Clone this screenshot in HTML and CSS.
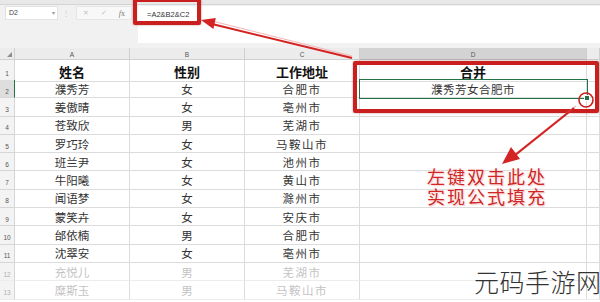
FILE: index.html
```html
<!DOCTYPE html>
<html lang="zh-CN">

<head>
    <meta charset="UTF-8">
    <meta name="viewport" content="width=device-width, initial-scale=1.0">
    <title>合并单元格</title>
    <link rel="stylesheet" href="styles.css">
</head>

<body>
    <div class="page">
        <div class="formula-area">
            <div class="ribbon-edge"></div>
            <div class="formula-row">
                <div class="left-tools">
                    <div class="name-box">D2 <span class="caret">▾</span></div>
                    <span class="sep">⋮</span>
                    <div class="fx-box">
                        <span class="fx-btn">✕</span>
                        <span class="fx-btn">✓</span>
                        <span class="fx-label"><i>f</i>x</span>
                    </div>
                </div>
                <div class="formula-input">=A2&amp;B2&amp;C2</div>
            </div>
        </div>

        <div class="sheet">
            <div class="row col-head">
                <div class="cell corner"><span class="corner-mark"></span></div>
                <div class="cell">A</div>
                <div class="cell">B</div>
                <div class="cell">C</div>
                <div class="cell selected-head">D</div>
                <div class="cell"></div>
            </div>
            <div class="row first">
                <div class="cell num">1</div>
                <div class="cell bold">姓名</div>
                <div class="cell bold">性别</div>
                <div class="cell bold">工作地址</div>
                <div class="cell bold">合并</div>
                <div class="cell"></div>
            </div>
            <div class="row">
                <div class="cell num active">2</div>
                <div class="cell name">濮秀芳</div>
                <div class="cell">女</div>
                <div class="cell city">合肥市</div>
                <div class="cell merged">濮秀芳女合肥市</div>
                <div class="cell"></div>
            </div>
            <div class="row">
                <div class="cell num">3</div>
                <div class="cell name">姜傲晴</div>
                <div class="cell">女</div>
                <div class="cell city">亳州市</div>
                <div class="cell"></div>
                <div class="cell"></div>
            </div>
            <div class="row">
                <div class="cell num">4</div>
                <div class="cell name">苍致欣</div>
                <div class="cell">男</div>
                <div class="cell city">芜湖市</div>
                <div class="cell"></div>
                <div class="cell"></div>
            </div>
            <div class="row">
                <div class="cell num">5</div>
                <div class="cell name">罗巧玲</div>
                <div class="cell">女</div>
                <div class="cell city">马鞍山市</div>
                <div class="cell"></div>
                <div class="cell"></div>
            </div>
            <div class="row">
                <div class="cell num">6</div>
                <div class="cell name">班兰尹</div>
                <div class="cell">女</div>
                <div class="cell city">池州市</div>
                <div class="cell"></div>
                <div class="cell"></div>
            </div>
            <div class="row">
                <div class="cell num">7</div>
                <div class="cell name">牛阳曦</div>
                <div class="cell">女</div>
                <div class="cell city">黄山市</div>
                <div class="cell"></div>
                <div class="cell"></div>
            </div>
            <div class="row">
                <div class="cell num">8</div>
                <div class="cell name">闻语梦</div>
                <div class="cell">女</div>
                <div class="cell city">滁州市</div>
                <div class="cell"></div>
                <div class="cell"></div>
            </div>
            <div class="row">
                <div class="cell num">9</div>
                <div class="cell name">蒙笑卉</div>
                <div class="cell">女</div>
                <div class="cell city">安庆市</div>
                <div class="cell"></div>
                <div class="cell"></div>
            </div>
            <div class="row">
                <div class="cell num">10</div>
                <div class="cell name">邰依楠</div>
                <div class="cell">男</div>
                <div class="cell city">合肥市</div>
                <div class="cell"></div>
                <div class="cell"></div>
            </div>
            <div class="row">
                <div class="cell num">11</div>
                <div class="cell name">沈翠安</div>
                <div class="cell">女</div>
                <div class="cell city">亳州市</div>
                <div class="cell"></div>
                <div class="cell"></div>
            </div>
            <div class="row faded">
                <div class="cell num">12</div>
                <div class="cell name">充悦儿</div>
                <div class="cell">男</div>
                <div class="cell city">芜湖市</div>
                <div class="cell"></div>
                <div class="cell"></div>
            </div>
            <div class="row faded">
                <div class="cell num">13</div>
                <div class="cell name">糜斯玉</div>
                <div class="cell">男</div>
                <div class="cell city">马鞍山市</div>
                <div class="cell"></div>
                <div class="cell"></div>
            </div>
        </div>

        <!-- annotations drawn over the sheet -->
        <div class="mark formula-mark"></div>
        <div class="mark range-mark"></div>
        <div class="cell-cursor"><span class="handle"></span></div>

        <svg class="arrows" width="600" height="302" viewBox="0 0 600 302">
            <line x1="352" y1="56" x2="212" y2="21" stroke="#f2b8b8" stroke-width="1.2" />
            <line x1="352" y1="58" x2="212" y2="24" stroke="#d42323" stroke-width="2" />
            <polygon points="201,20 215.8,18 213.4,29" fill="#d42323" />
            <circle cx="586" cy="100" r="7" fill="none" stroke="#c81f1f" stroke-width="1.6" />
            <line x1="576" y1="106" x2="514" y2="155" stroke="#f2b8b8" stroke-width="1.2" />
            <line x1="574" y1="108" x2="514" y2="156" stroke="#d42323" stroke-width="2.2" />
            <polygon points="502,164 520,159 511,147" fill="#d42323" />
        </svg>

        <div class="note">左键双击此处<br>实现公式填充</div>
        <div class="watermark">元码手游网</div>
    </div>
</body>

</html>
```

FILE: styles.css
```css
body {
    margin: 0;
    background-color: #ffffff;
    font-family: "Noto Sans CJK SC", "Liberation Sans", sans-serif;
}

.page {
    position: relative;
    width: 600px;
    height: 302px;
    overflow: hidden;
    background-color: #ffffff;
}

/* formula bar */

.formula-area {
    height: 48px;
    background-color: #f1f1f1;
    display: flex;
    flex-direction: column;
}

.ribbon-edge {
    height: 5px;
    background-color: #e8e8e8;
    border-bottom: 1px solid #d4d4d4;
    box-sizing: border-box;
}

.formula-row {
    display: flex;
    padding-top: 1px;
}

.left-tools {
    display: flex;
    align-items: flex-start;
    width: 138px;
    padding-left: 5px;
    box-sizing: border-box;
}

.name-box {
    width: 53px;
    height: 14px;
    background-color: #ffffff;
    border: 1px solid #e2e2e2;
    box-sizing: border-box;
    font-family: "Liberation Sans", sans-serif;
    font-size: 7px;
    line-height: 12px;
    color: #444;
    padding-left: 3px;
    display: flex;
    justify-content: space-between;
    padding-right: 2px;
}

.caret {
    color: #999;
    font-size: 6px;
}

.sep {
    color: #c8c8c8;
    font-size: 8px;
    line-height: 14px;
    margin: 0 6px 0 4px;
}

.fx-box {
    width: 56px;
    height: 14px;
    background-color: #f8f8f8;
    border: 1px solid #e6e6e6;
    box-sizing: border-box;
    display: flex;
    align-items: center;
    justify-content: space-around;
    font-family: "DejaVu Sans", sans-serif;
    font-size: 7px;
    color: #c4c4c4;
}

.fx-label {
    color: #777;
    font-family: "Liberation Serif", serif;
    font-size: 8px;
}

.formula-input {
    flex: 1;
    height: 37px;
    background-color: #ffffff;
    font-family: "Liberation Sans", sans-serif;
    font-size: 7.5px;
    color: #333;
    padding: 4px 0 0 9px;
    box-sizing: border-box;
}

/* grid */

.row {
    display: grid;
    grid-template-columns: 15px 115px 115px 115px 227px 1fr;
    height: 18.3px;
}

.cell {
    border-right: 1px solid #dcdcdc;
    border-bottom: 1px solid #dcdcdc;
    box-sizing: border-box;
    display: flex;
    align-items: center;
    justify-content: center;
    font-size: 11.5px;
    color: #333;
    white-space: nowrap;
}

.col-head {
    height: 12px;
}

.col-head .cell {
    background-color: #ececec;
    border-color: #d0d0d0;
    font-family: "Liberation Sans", sans-serif;
    font-size: 6.5px;
    color: #555;
    padding-top: 2px;
}

.col-head .selected-head {
    background-color: #d3d3d3;
    border-bottom: 1px solid #b8b8b8;
}

.corner {
    position: relative;
}

.corner-mark {
    position: absolute;
    right: 2px;
    bottom: 2px;
    width: 0;
    height: 0;
    border-left: 5px solid transparent;
    border-bottom: 5px solid #8c8c8c;
}

.row.first {
    height: 20px;
}

.num {
    background-color: #f3f3f3;
    border-color: #d6d6d6;
    font-family: "Liberation Sans", sans-serif;
    font-size: 6.5px;
    color: #555;
    padding-top: 5px;
}

.num.active {
    background-color: #dedede;
    border-right: 1px solid #217346;
}

.bold {
    font-weight: bold;
    font-size: 13px;
    color: #111;
    padding-top: 2px;
}

.name {
    letter-spacing: 0px;
}

.city {
    letter-spacing: 1.5px;
}

.merged {
    letter-spacing: 0.5px;
}

.faded .cell {
    color: #c4c4c4;
    border-bottom-color: #ececec;
}

.faded .num {
    color: #b0b0b0;
}

/* overlays */

.mark {
    position: absolute;
    border: 4px solid #c91f1f;
    border-radius: 2px;
    box-sizing: border-box;
    box-shadow: 0 0 2px rgba(120, 0, 0, 0.5);
}

.formula-mark {
    left: 133px;
    top: -2px;
    width: 68px;
    height: 27px;
}

.range-mark {
    left: 353px;
    top: 61px;
    width: 246px;
    height: 52px;
}

.cell-cursor {
    position: absolute;
    left: 359px;
    top: 79px;
    width: 229px;
    height: 20px;
    border: 1.5px solid #217346;
    box-sizing: border-box;
}

.handle {
    position: absolute;
    right: -3px;
    bottom: -3px;
    width: 4px;
    height: 4px;
    background-color: #217346;
    border: 1px solid #ffffff;
}

.arrows {
    position: absolute;
    left: 0;
    top: 0;
}

.note {
    position: absolute;
    left: 427px;
    top: 167px;
    font-size: 18px;
    line-height: 19.5px;
    letter-spacing: 2px;
    color: #cf2626;
    text-shadow: 0 0 2px #ffffff, 0 0 3px #ffd6d6, 1px 1px 1px #f3c0c0;
}

.watermark {
    position: absolute;
    left: 474px;
    top: 266px;
    font-size: 25px;
    line-height: 30px;
    color: #333333;
    font-weight: 300;
    letter-spacing: 0.5px;
    white-space: nowrap;
}
```
